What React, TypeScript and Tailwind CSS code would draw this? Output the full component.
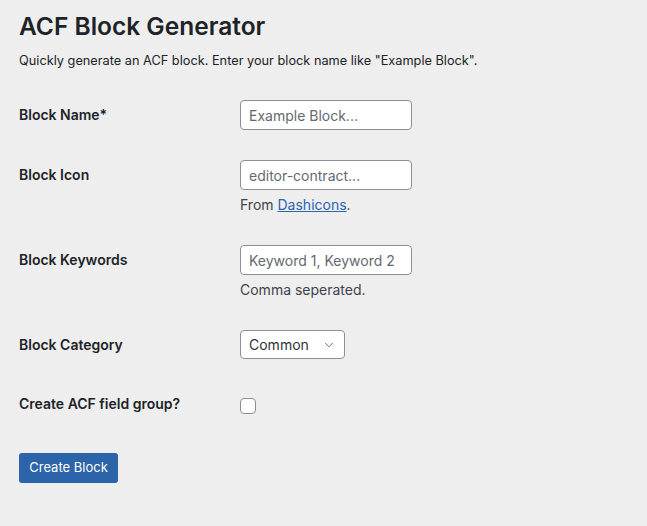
import { ChevronDown } from 'lucide-react';

const font = { fontFamily: 'Inter, "Noto Sans", sans-serif' };

function Row({ label, children, extra }: { label: string; children: React.ReactNode; extra?: string }) {
    return (
        <div className={`flex ${extra ?? ''}`}>
            <div className="w-[221px] shrink-0 pt-[20px] pb-[20px] text-[14px] leading-[19px] font-semibold text-[#1d2327]">
                {label}
            </div>
            <div className="py-[15px]">{children}</div>
        </div>
    );
}

function TextInput({ placeholder }: { placeholder: string }) {
    return (
        <input
            type="text"
            placeholder={placeholder}
            className="block h-[30px] w-[172px] rounded-[4px] border border-[#8c8f94] bg-white px-[8px] text-[14px] text-[#2c3338] placeholder:text-[#646970] outline-none"
            style={font}
        />
    );
}

export default function App() {
    return (
        <div className="min-h-[526px] w-full bg-[#eeeeee] px-[19px] pt-[9px]" style={font}>
            <h1 className="text-[24.5px] leading-[34px] font-semibold text-[#1d2327]">ACF Block Generator</h1>
            <p className="mt-[9px] text-[12.75px] leading-[18px] text-[#1d2327]">
                Quickly generate an ACF block. Enter your block name like "Example Block".
            </p>

            <div className="mt-[15px] flex flex-col">
                <Row label="Block Name*">
                    <TextInput placeholder="Example Block..." />
                </Row>
                <Row label="Block Icon">
                    <TextInput placeholder="editor-contract..." />
                    <p className="mt-[5px] text-[14px] leading-[20px] text-[#3c434a]">
                        From <a href="#" className="text-[#2a65b0] underline">Dashicons</a>.
                    </p>
                </Row>
                <Row label="Block Keywords">
                    <TextInput placeholder="Keyword 1, Keyword 2" />
                    <p className="mt-[5px] text-[14px] leading-[20px] text-[#3c434a]">Comma seperated.</p>
                </Row>
                <Row label="Block Category">
                    <div className="relative flex h-[29px] w-[105px] items-center rounded-[4px] border border-[#8c8f94] bg-white pl-[8px] text-[14px] text-[#2c3338]">
                        Common
                        <ChevronDown size={14} strokeWidth={1.5} className="absolute right-[8px] text-[#50575e]" />
                    </div>
                </Row>
                <Row label="Create ACF field group?">
                    <div className="mt-[9px] h-[16px] w-[16px] rounded-[4px] border border-[#8c8f94] bg-white" />
                </Row>
            </div>

            <button className="mt-[20px] h-[30px] w-[99px] rounded-[3px] bg-[#2b64a8] text-[13px] text-white">
                Create Block
            </button>
        </div>
    );
}
